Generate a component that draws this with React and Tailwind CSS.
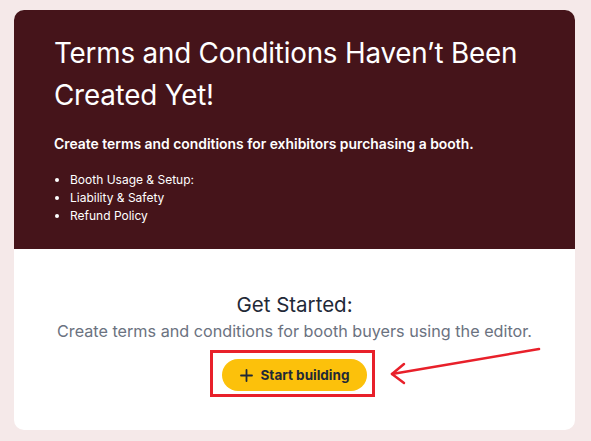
import React from "react";

export default function App() {
  return (
    <div className="min-h-[441px] w-[591px] bg-[#f5e9e9] pt-[10px] pl-[14px] pr-[16px] pb-[11px]" style={{ fontFamily: "Inter, 'Noto Sans', sans-serif" }}>
      <div className="rounded-[10px] bg-white overflow-hidden">
        <div className="bg-[#45141a] pl-[40px] pr-6 pt-[22px] pb-[24px] text-white">
          <h1 className="text-[27.8px] leading-[42px] font-normal tracking-[-0.2px]">Terms and Conditions Haven’t Been Created Yet!</h1>
          <p className="mt-[18px] text-[13.9px] leading-[20px] font-semibold">Create terms and conditions for exhibitors purchasing a booth.</p>
          <ul className="mt-[17px] list-disc pl-[16px] text-[12px] leading-[18px]">
            <li>Booth Usage &amp; Setup:</li>
            <li>Liability &amp; Safety</li>
            <li>Refund Policy</li>
          </ul>
        </div>
        <div className="relative flex flex-col items-center pt-[43px] pb-[33px]">
          <h2 className="text-[20.5px] leading-[26px] text-[#1f2937]">Get Started:</h2>
          <p className="mt-[2px] text-[16.2px] leading-[22px] text-[#6b7280]">Create terms and conditions for booth buyers using the editor.</p>
          <div className="mt-[8px] mr-[4px] border-[3px] border-[#e8202a] pl-[9px] pr-[5px] pt-[6px] pb-[3px]">
            <button className="flex h-[32px] w-[145px] items-center justify-center gap-[8px] rounded-full bg-[#fcc10b] text-[13.5px] font-bold text-[#1f2937]">
              <svg width="13" height="13" viewBox="0 0 13 13" fill="none" stroke="#1f2937" strokeWidth="1.8" strokeLinecap="round"><path d="M6.5 1v11M1 6.5h11" /></svg>
              Start building
            </button>
          </div>
          <svg className="absolute left-[370px] top-[95px]" width="160" height="45" viewBox="0 0 160 45" fill="none" stroke="#e8202a" strokeWidth="2.5" strokeLinecap="round" strokeLinejoin="round">
            <path d="M155 5 L8 30" />
            <path d="M20 20 L8 30 L20 39" />
          </svg>
        </div>
      </div>
    </div>
  );
}
